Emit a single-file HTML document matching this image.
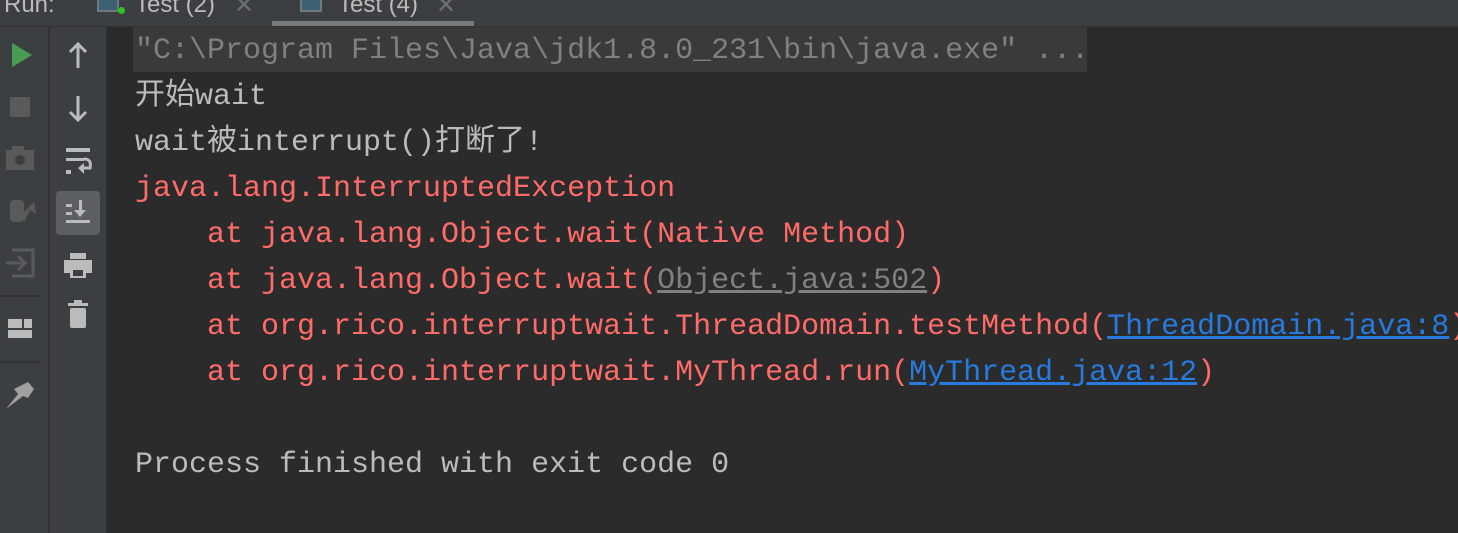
<!DOCTYPE html>
<html><head><meta charset="utf-8"><style>
body{margin:0;width:1458px;height:533px;overflow:hidden;background:#2b2b2b;position:relative;font-family:"Liberation Sans",sans-serif}
.top{position:absolute;left:0;top:0;width:1458px;height:26px;background:#3c3f41;border-bottom:1px solid #323232}
.tab{position:absolute;top:-9px;font-size:24px;color:#bbbbbb}
.col1{position:absolute;left:0;top:27px;width:48px;height:506px;background:#3c3f41;border-right:2px solid #323232}
.col2{position:absolute;left:50px;top:27px;width:56px;height:506px;background:#3c3f41;border-right:1px solid #323232}
.con{position:absolute;left:135px;top:28px;font-family:"Liberation Mono","Noto Sans CJK SC",monospace;font-size:30px;letter-spacing:0px;line-height:46px;white-space:pre;color:#bbbbbb}
.hl{position:absolute;left:133px;top:27px;width:954px;height:45px;background:#3a3a3a}
.r{color:#ff6b68}.g{color:#808080}.l{color:#287bde;text-decoration:underline}.gl{color:#808080;text-decoration:underline}
svg{position:absolute}
</style></head><body>
<div class="top">
<span class="tab" style="left:4px">Run:</span>
<div style="position:absolute;left:97px;top:0;width:18px;height:10px;border:2px solid #6e7a82;border-top:none;background:#3d6173"></div>
<div style="position:absolute;left:118px;top:7px;width:7px;height:7px;border-radius:50%;background:#2ec225"></div>
<span class="tab" style="left:135px">Test (2)</span><span class="tab" style="left:234px;color:#6e6e6e">✕</span>
<div style="position:absolute;left:300px;top:0;width:18px;height:10px;border:2px solid #6e7a82;border-top:none;background:#3d6173"></div>
<span class="tab" style="left:338px">Test (4)</span><span class="tab" style="left:436px;color:#6e6e6e">✕</span>
<div style="position:absolute;left:272px;top:21px;width:202px;height:5px;background:#747a80"></div>
</div>
<div class="col1"></div><div class="col2"></div>
<svg width="110" height="533" viewBox="0 0 110 533">
<polygon points="12,43 12,67 32,55" fill="#499c54"/>
<rect x="10" y="97" width="20" height="20" fill="#5a5a5a"/>
<g fill="#5a5a5a"><rect x="6" y="150" width="28" height="20"/><rect x="12" y="146" width="12" height="6"/></g><circle cx="20" cy="160" r="5" fill="#3c3f41"/>
<g fill="#5a5a5a"><rect x="10" y="200" width="14" height="22" rx="4"/><polygon points="22,214 34,202 36,214 30,210 24,222"/></g>
<g fill="none" stroke="#5a5a5a" stroke-width="3"><polyline points="12,250 33,250 33,276 12,276"/><line x1="6" y1="263" x2="24" y2="263"/><polyline points="18,256 25,263 18,270"/></g>
<rect x="0" y="295" width="40" height="2" fill="#323232"/>
<g fill="#bbbbbb"><rect x="8" y="319" width="14" height="9"/><rect x="24" y="319" width="8" height="9"/><rect x="8" y="330" width="24" height="8"/></g>
<rect x="0" y="361" width="40" height="2" fill="#323232"/>
<polygon points="6,409 18,394 14,389 28,382 34,389 28,398 23,396" fill="#a0a0a0"/>
<g stroke="#bbbbbb" stroke-width="3" fill="none"><line x1="78" y1="44" x2="78" y2="68"/><polyline points="70,52 78,44 86,52"/><line x1="78" y1="96" x2="78" y2="120"/><polyline points="70,112 78,120 86,112"/></g>
<g fill="#bbbbbb"><rect x="66" y="148" width="24" height="4"/><rect x="66" y="158" width="18" height="3"/><rect x="66" y="170" width="5" height="4"/></g>
<path d="M84 159 Q92 159 90 168 L80 168" stroke="#bbbbbb" stroke-width="3" fill="none"/><polygon points="78,168 84,163 84,174" fill="#bbbbbb"/>
<rect x="56" y="191" width="44" height="44" rx="4" fill="#5b5f61"/>
<g fill="#bbbbbb"><rect x="66" y="204" width="6" height="3"/><rect x="66" y="212" width="6" height="3"/><rect x="66" y="220" width="24" height="3"/><rect x="79" y="200" width="3" height="12"/><polygon points="74,210 86,210 80,217"/></g>
<g fill="#bbbbbb"><rect x="70" y="253" width="16" height="6"/><rect x="64" y="260" width="28" height="13"/><rect x="70" y="268" width="16" height="10"/></g><rect x="73" y="270" width="10" height="6" fill="#3c3f41"/>
<g fill="#bbbbbb"><rect x="68" y="303" width="20" height="3"/><rect x="74" y="300" width="8" height="3"/><rect x="70" y="308" width="16" height="20" rx="2"/></g>
</svg>
<div class="hl"></div>
<div class="con"><span class="g">"C:\Program Files\Java\jdk1.8.0_231\bin\java.exe" ...</span>
开始wait
wait被interrupt()打断了!
<span class="r">java.lang.InterruptedException</span>
<span class="r">    at java.lang.Object.wait(Native Method)</span>
<span class="r">    at java.lang.Object.wait(<span class="gl">Object.java:502</span>)</span>
<span class="r">    at org.rico.interruptwait.ThreadDomain.testMethod(<span class="l">ThreadDomain.java:8</span>)</span>
<span class="r">    at org.rico.interruptwait.MyThread.run(<span class="l">MyThread.java:12</span>)</span>

Process finished with exit code 0</div>
</body></html>
